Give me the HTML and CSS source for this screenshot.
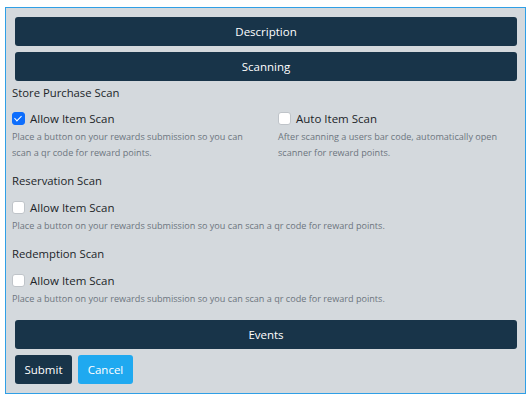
FILE: index.html
```html
<!DOCTYPE html>
<html>
<head>
<meta charset="utf-8">
<link rel="stylesheet" href="styles.css">
</head>
<body>
<div class="panel">
  <div class="bar bar-first">Description</div>
  <div class="bar">Scanning</div>

  <div class="title title-first">Store Purchase Scan</div>
  <div class="cols">
    <div class="col">
      <label class="check"><input type="checkbox" checked><span>Allow Item Scan</span></label>
      <div class="help">Place a button on your rewards submission so you can<br>scan a qr code for reward points.</div>
    </div>
    <div class="col">
      <label class="check"><input type="checkbox"><span>Auto Item Scan</span></label>
      <div class="help">After scanning a users bar code, automatically open<br>scanner for reward points.</div>
    </div>
  </div>

  <div class="title">Reservation Scan</div>
  <label class="check"><input type="checkbox"><span>Allow Item Scan</span></label>
  <div class="help">Place a button on your rewards submission so you can scan a qr code for reward points.</div>

  <div class="title">Redemption Scan</div>
  <label class="check"><input type="checkbox"><span>Allow Item Scan</span></label>
  <div class="help">Place a button on your rewards submission so you can scan a qr code for reward points.</div>

  <div class="bar bar-events">Events</div>
  <div class="actions">
    <button class="btn btn-submit">Submit</button>
    <button class="btn btn-cancel">Cancel</button>
  </div>
</div>
</body>
</html>
```
FILE: styles.css
```css
html, body {
  margin: 0;
  padding: 0;
  background: #ffffff;
}
body {
  font-family: "Open Sans", "Noto Sans", sans-serif;
  color: #212529;
}
.panel {
  box-sizing: border-box;
  width: 521px;
  height: 387px;
  margin: 7px 0 0 5px;
  border: 1px solid #2f9fe6;
  background: #d4d9dd;
  padding: 9px 6px 8px 6px;
}
.bar {
  box-sizing: border-box;
  height: 29px;
  margin: 6px 2px 0 3px;
  background: #183449;
  color: #ffffff;
  border-radius: 3px;
  font-size: 11.5px;
  display: flex;
  align-items: center;
  justify-content: center;
}
.bar-first { margin-top: 0; }
.bar-events { margin-top: 13px; }
.title {
  font-size: 11.3px;
  line-height: 18px;
  margin-top: 11px;
}
.title-first { margin-top: 3px; }
.cols {
  display: grid;
  grid-template-columns: 266px 1fr;
}
.check {
  display: flex;
  align-items: center;
  gap: 5px;
  height: 20px;
  margin-top: 7px;
  font-size: 11.5px;
}
.cols .check { margin-top: 6px; }
.check input {
  appearance: none;
  -webkit-appearance: none;
  margin: 0;
  width: 13px;
  height: 13px;
  box-sizing: border-box;
  border: 1px solid #bfc4c9;
  border-radius: 3px;
  background: #ffffff;
  position: relative;
}
.check input:checked {
  background: #0d6efd;
  border-color: #0d6efd;
}
.check input:checked::after {
  content: "";
  position: absolute;
  left: 3px;
  top: 1px;
  width: 3px;
  height: 6px;
  border: solid #ffffff;
  border-width: 0 1.5px 1.5px 0;
  transform: rotate(45deg);
}
.help {
  font-size: 9.1px;
  line-height: 16px;
  color: #6c757d;
  margin-top: 1px;
}
.actions {
  display: flex;
  gap: 6px;
  margin: 6px 0 0 3px;
}
.btn {
  box-sizing: border-box;
  height: 29px;
  border: none;
  border-radius: 3px;
  color: #ffffff;
  font-family: "Open Sans", "Noto Sans", sans-serif;
  font-size: 11.5px;
  padding: 0;
}
.btn-submit { width: 57px; background: #183449; }
.btn-cancel { width: 55px; background: #1fa9f0; }
```
